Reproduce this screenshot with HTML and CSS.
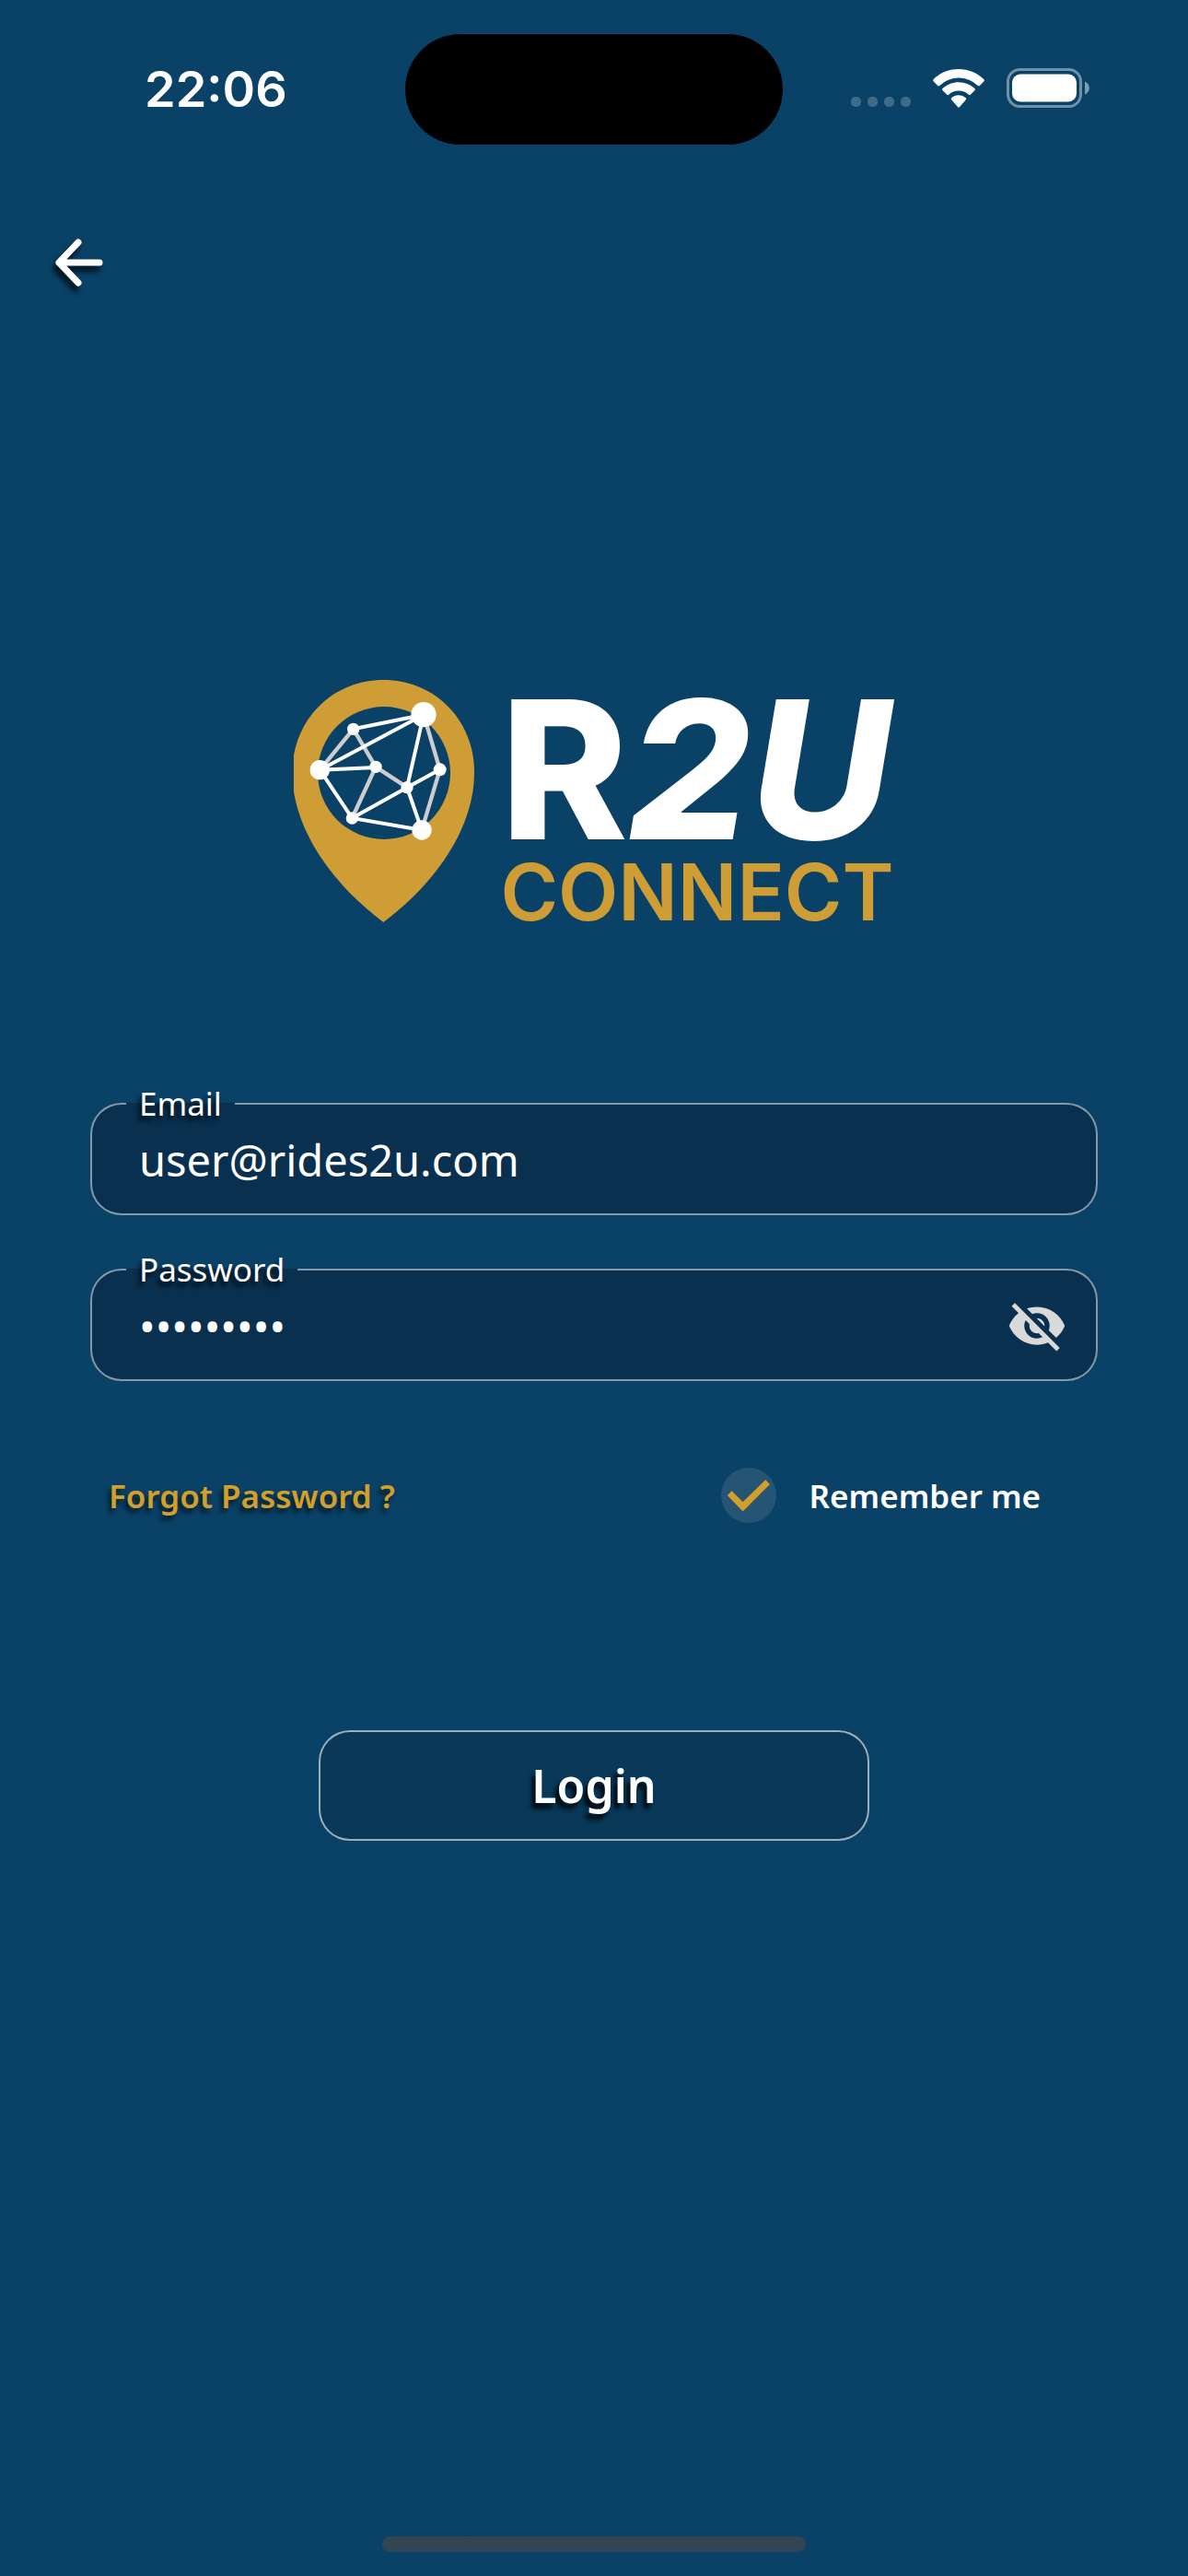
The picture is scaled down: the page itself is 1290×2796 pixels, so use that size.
FILE: index.html
```html
<!DOCTYPE html>
<html lang="en">
	<head>
		<meta charset="utf-8">
		<meta name="viewport" content="width=device-width, initial-scale=1">
		<title>R2U Connect</title>
		<link rel="stylesheet" href="styles.css">
	</head>
	<body>
		<div class="status">
			<span class="time">22:06</span>
			<div class="island"></div>
			<div class="status-icons">
				<div class="dots"><i></i><i></i><i></i><i></i></div>
				<svg class="wifi" viewBox="0 0 56 42" fill="#fff">
					<path d="M28 0C17.500 0 7.500 4 .6 11.200a1.500 1.500 0 0 0 0 2.100l4.600 4.600q1 .8 2 0a30 30 0 0 1 41.600 0q1 .8 2 0l4.600-4.600a1.500 1.500 0 0 0 0-2.100C48.500 4 38.500 0 28 0z"/>
					<path d="M28 14.200c-6.600 0-12.800 2.500-17.400 6.800a1.500 1.500 0 0 0 0 2.200l4.600 4.600q1 .8 2 0a16 16 0 0 1 21.600 0q1 .8 2 0l4.600-4.600a1.500 1.500 0 0 0 0-2.200A25.500 25.500 0 0 0 28 14.200z"/>
					<path d="M28 28.300c-3 0-5.700 1.100-7.800 2.900q-1 1 0 2l6.700 7.700q1.100 1 2.200 0l6.700-7.700q1-1 0-2a12 12 0 0 0-7.800-2.900z"/>
				</svg>
				<svg class="battery" viewBox="0 0 90 43">
					<rect x="1.500" y="1.500" width="79" height="40" rx="13" fill="none" stroke="#fff" stroke-opacity=".42" stroke-width="3"/>
					<rect x="6" y="6.500" width="70" height="30" rx="9" fill="#fff"/>
					<path d="M85 14.500c6.500 3 6.500 11 0 14z" fill="#fff" fill-opacity=".48"/>
				</svg>
			</div>
		</div>
		<header>
			<button class="back" type="button" aria-label="Back">
				<svg viewBox="0 0 60 60" fill="none" stroke="#fff" stroke-width="7" stroke-linecap="round" stroke-linejoin="round">
					<path d="M28 8 7 30l21 22M7 30h44"/>
				</svg>
			</button>
		</header>
		<main>
			<div class="logo">
				<svg class="pin" viewBox="55 54 588 789">
					<path fill="#cf9d35" d="M347 54C515 54 643 185 643 355C643 530 525 710 347 843C170 710 50 530 50 355C50 185 180 54 347 54z"/>
					<circle cx="349" cy="357" r="216" fill="#0a4267"/>
					<path d="M140 347 249 214 322 337 245 504M322 337 424 404M478 167 531 346 472 543" fill="none" stroke="#cdcdcf" stroke-width="13"/>
					<path d="M249 214 478 167 140 347H140L322 339M140 347 245 504 472 543 424 404 478 167M245 504 424 404 531 346" fill="none" stroke="#fff" stroke-width="12"/>
					<g fill="#fff">
						<circle cx="478" cy="167" r="41"/>
						<circle cx="249" cy="214" r="20"/>
						<circle cx="140" cy="347" r="32"/>
						<circle cx="322" cy="337" r="20"/>
						<circle cx="531" cy="346" r="21"/>
						<circle cx="424" cy="404" r="20"/>
						<circle cx="245" cy="504" r="20"/>
						<circle cx="472" cy="543" r="32"/>
					</g>
				</svg>
				<h1>R<em>2U</em><span>CONNECT</span></h1>
			</div>
			<form>
				<fieldset>
					<legend><label for="email">Email</label></legend>
					<input type="email" id="email" value="user@rides2u.com">
				</fieldset>
				<fieldset>
					<legend><label for="password">Password</label></legend>
					<input type="password" id="password" value="rides2you">
					<button class="eye" type="button" aria-label="Show password">
						<svg viewBox="0 0 24 24" fill="#d9d9d9"><path d="M12 7c2.760 0 5 2.240 5 5 0 .65-.13 1.260-.36 1.830l2.920 2.920c1.510-1.260 2.700-2.890 3.430-4.750-1.730-4.390-6-7.500-11-7.500-1.400 0-2.740.25-3.980.7l2.160 2.160C10.740 7.130 11.350 7 12 7zM2 4.270l2.280 2.280.46.46C3.080 8.300 1.780 10.020 1 12c1.730 4.390 6 7.500 11 7.500 1.550 0 3.030-.3 4.380-.84l.42.42L19.730 22 21 20.730 3.270 3 2 4.270zM7.530 9.800l1.550 1.550c-.05.21-.08.43-.08.65 0 1.660 1.340 3 3 3 .22 0 .44-.03.65-.08l1.550 1.550c-.67.33-1.410.53-2.200.53-2.760 0-5-2.240-5-5 0-.79.2-1.530.53-2.200zm4.310-.78l3.150 3.150.02-.16c0-1.660-1.340-3-3-3l-.17.01z"/></svg>
					</button>
				</fieldset>
				<div class="options">
					<a href="#">Forgot Password ?</a>
					<label class="remember"><input type="checkbox" checked>Remember me</label>
				</div>
				<button class="login" type="submit">Login</button>
			</form>
		</main>
		<footer><div class="home"></div></footer>
	</body>
</html>
```

FILE: styles.css
```css
/* #0a4267 background blue, #09304f field blue, #d29f2b gold */
*{
	box-sizing:border-box;
}
body{
	margin:0;
	min-height:100vh;
	display:flex;
	flex-direction:column;
	background-color:#0a4267;
	color:#fff;
	font-family:"Noto Sans", sans-serif;
}
button{
	background:none;
	border:none;
	padding:0;
	color:inherit;
	font-family:inherit;
}
svg{
	display:block;
}

/* status bar */
.status{
	display:grid;
	grid-template-columns:1fr auto 1fr;
	align-items:center;
	padding:37px 107px 0;
}
.time{
	padding-left:50px;
	font-family:Inter, sans-serif;
	font-size:54px;
	font-weight:600;
	line-height:68px;
}
.island{
	width:410px;
	height:120px;
	border-radius:60px;
	background-color:#000;
}
.status-icons{
	display:flex;
	justify-content:flex-end;
	align-items:flex-end;
	gap:24px;
	padding-bottom:3px;
}
.dots{
	display:flex;
	gap:7px;
	padding-bottom:1px;
}
.dots i{
	width:11px;
	height:11px;
	border-radius:5px;
	background-color:rgba(255,255,255,.22);
}
.wifi{
	width:56px;
	height:42px;
}
.battery{
	width:90px;
	height:43px;
}

/* back arrow */
header{
	padding:98px 57px 0;
}
.back svg{
	width:60px;
	height:60px;
	filter:drop-shadow(-3px 6px 3px rgba(0,0,0,.8));
}

main{
	flex:1;
	padding:418px 98px 0;
}

/* logo */
.logo{
	display:flex;
	justify-content:center;
	gap:28px;
}
.pin{
	width:196px;
	height:263px;
}
h1{
	margin:0;
	padding-top:11px;
	font-family:Inter, sans-serif;
	font-size:209px;
	font-weight:800;
	line-height:172px;
}
h1 span{
	display:block;
	margin-top:4px;
	color:#cf9d35;
	font-size:85px;
	font-weight:600;
	line-height:88px;
}

/* form */
form{
	display:flex;
	flex-direction:column;
	padding-top:164px;
}
fieldset{
	display:flex;
	align-items:center;
	min-width:0;
	margin:0 0 38px;
	padding:0 31px 18px 37px;
	border:2px solid rgba(255,255,255,.5);
	border-radius:34px;
	background-color:#09304f;
}
legend{
	padding:0 14px;
	font-size:35px;
	line-height:42px;
	text-shadow:-3px 5px 5px rgba(0,0,0,.8);
}
fieldset input{
	flex:1;
	min-width:0;
	height:80px;
	padding:0 14px;
	border:none;
	outline:none;
	background:none;
	color:#fff;
	font-family:inherit;
	font-size:47px;
}
.eye svg{
	width:66px;
	height:66px;
}
.options{
	display:flex;
	justify-content:space-between;
	align-items:center;
	padding:56px 62px 0 20px;
	font-size:35px;
	font-weight:600;
}
.options a{
	color:#d29f2b;
	text-decoration:none;
	text-shadow:-3px 5px 5px rgba(0,0,0,.6);
}
.remember{
	display:flex;
	align-items:center;
	gap:36px;
}
.remember input{
	appearance:none;
	width:60px;
	height:60px;
	margin:0;
	border-radius:50%;
	background-color:#255475;
}
.remember input:checked::before{
	content:"";
	display:block;
	width:60px;
	height:60px;
	background-color:#d29f2b;
	clip-path:polygon(20% 42%, 40% 62%, 81% 22%, 89% 30%, 40% 79%, 12% 50%);
}
.login{
	align-self:center;
	width:598px;
	height:120px;
	margin-top:225px;
	border:2px solid rgba(255,255,255,.6);
	border-radius:34px;
	background-color:#093859;
	font-size:50px;
	font-weight:600;
	text-shadow:-4px 6px 5px rgba(0,0,0,.9);
}

/* home indicator */
footer{
	display:flex;
	justify-content:center;
	padding-bottom:26px;
}
.home{
	width:460px;
	height:17px;
	border-radius:9px;
	background:linear-gradient(#37454f, #2d4658);
}
```
